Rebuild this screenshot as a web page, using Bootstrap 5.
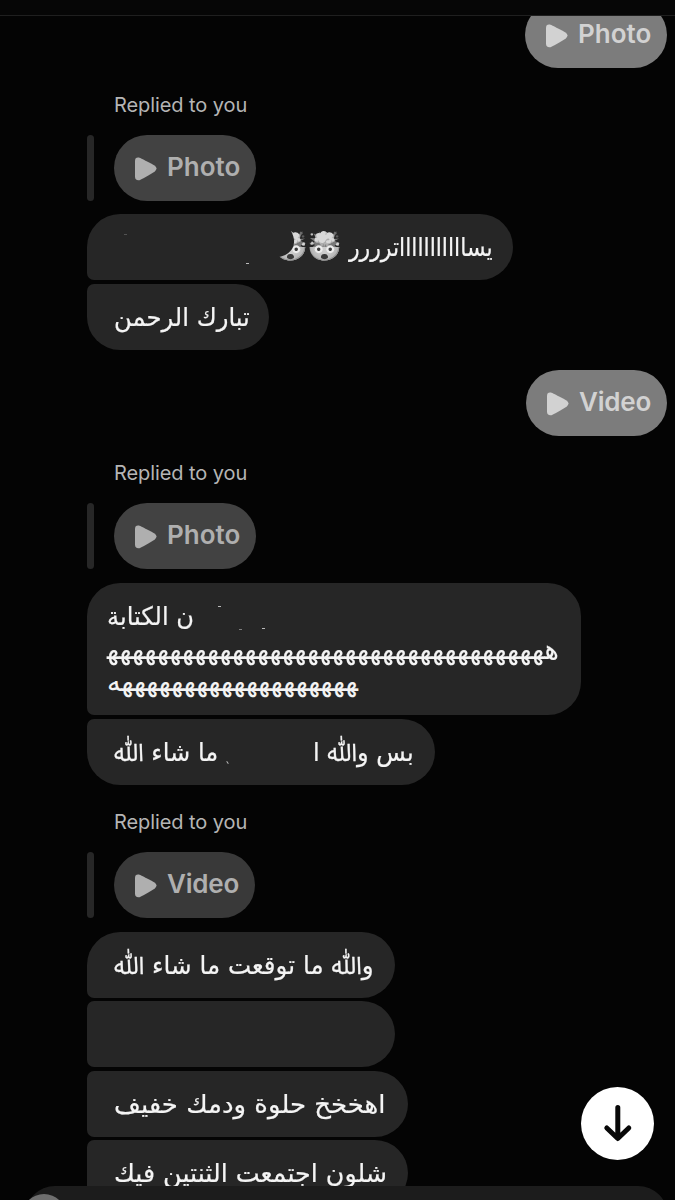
<!DOCTYPE html>
<html lang="en">
<head>
<meta charset="utf-8">
<meta name="viewport" content="width=device-width, initial-scale=1">
<title>Chat</title>
<link rel="stylesheet" href="https://cdn.jsdelivr.net/npm/bootstrap@5.3.0/dist/css/bootstrap.min.css">
<style>
body{background:#040404;color:#f4f4f4;font-family:Inter,"Liberation Sans",sans-serif}
.screen{height:1200px;width:675px}
.topbar{height:16px;background:#060606;border-bottom:1px solid #1f1f1f}
.thread{height:1170px;padding-left:87px;padding-right:8px}
.pill{height:66px;border-radius:33px;padding-left:21px;gap:10px;font-weight:600;font-size:26px;line-height:1;flex:none}
.pill svg{margin-top:1px;flex:none}
.pill b{font-weight:600;margin-top:-3px}
.photo-pill{width:142px}
.video-pill{width:141px}
.video-pill b{letter-spacing:-.2px}
.sent{background:#7c7c7c;color:#d2d2d2;align-self:flex-end}
.quoted{background:#424242;color:#afafaf}
.quoted.dim{background:#393939}
.reply-note{color:#b5b5b5;font-size:20px;line-height:24px;letter-spacing:-.08px;margin-left:27px}
.quote-bar{width:7px;height:66px;border-radius:4px;background:#272727;margin-right:20px}
.bubble{background:#262626;height:66px;border-radius:33px;position:relative;flex:none}
.first{border-bottom-left-radius:7px}
.middle{border-top-left-radius:7px;border-bottom-left-radius:7px}
.last{border-top-left-radius:7px}
.ar{font-family:"DejaVu Sans",sans-serif;font-size:25.5px;line-height:32px;height:32px;white-space:nowrap;transform-origin:0 50%;display:inline-block;direction:rtl;flex:none;-webkit-text-stroke:.2px currentColor}
.ar q{quotes:none;font-family:"Noto Sans Arabic UI","DejaVu Sans",sans-serif;font-size:.96em;-webkit-text-stroke:.3px currentColor;line-height:1}
.laugh{font-size:27px;line-height:28px;-webkit-text-stroke:.1px currentColor}
.slot{height:32px;flex:none}
.emoji{font-family:"Noto Color Emoji",sans-serif;font-size:28px;line-height:36px;width:34px;text-align:center;filter:grayscale(1) contrast(.85);flex:none;white-space:nowrap}
.emoji.cut{clip-path:path("M17 0Q24 12 19 20Q13 29 0 28V36H34V0Z");margin-right:0;margin-left:-4px}
.speck{position:absolute;width:3px;height:1px;background:#bbb}
.composer{height:60px;background:#1c1c1c;border-radius:34px;position:absolute;left:25px;right:7px;top:1186px}
.avatar{position:absolute;width:44px;height:44px;border-radius:50%;background:#6f6f6f;left:-3px;top:8px}
.to-bottom{position:absolute;left:581px;top:1087px;width:73px;height:73px;background:#fff}
</style>
</head>
<body>
<svg width="0" height="0" class="position-absolute">
<symbol id="play" viewBox="0 0 22 24"><path d="M0 4Q0 0 4 .6Q5 .8 19.500 8.500Q23.500 11.500 19.500 14.800Q7 22.500 4.500 23.200Q0 23.800 0 19.500Z" fill="currentColor"/></symbol>
</svg>
<div class="screen position-relative overflow-hidden">
  <header class="topbar"></header>
  <main class="thread d-flex flex-column overflow-hidden">
    <div class="pill photo-pill sent d-flex align-items-center" style="margin-top:-14px"><svg width="22" height="24"><use href="#play"/></svg><b>Photo</b></div>
    <div class="reply-note" style="margin-top:25px">Replied to you</div>
    <div class="d-flex" style="margin-top:18px"><i class="quote-bar"></i><div class="pill photo-pill quoted d-flex align-items-center"><svg width="22" height="24"><use href="#play"/></svg><b>Photo</b></div></div>
    <div class="bubble first d-flex align-items-center justify-content-end" style="width:426px;margin-top:13px;padding-right:20px">
      <i class="speck" style="left:37px;top:20px;opacity:.3"></i><i class="speck" style="left:159px;top:49px"></i>
      <span class="emoji cut">🤯</span>
      <span class="emoji me-2">🤯</span>
      <div class="slot" style="width:144px"><span class="ar" data-fit="144">يساااااااااااترررر</span></div>
    </div>
    <div class="bubble last d-flex align-items-center" style="width:182px;margin-top:4px;padding-left:27px"><span class="ar" data-fit="136">تبارك الرحمن</span></div>
    <div class="pill video-pill sent d-flex align-items-center" style="margin-top:20px"><svg width="22" height="24"><use href="#play"/></svg><b>Video</b></div>
    <div class="reply-note" style="margin-top:25px">Replied to you</div>
    <div class="d-flex" style="margin-top:18px"><i class="quote-bar"></i><div class="pill photo-pill quoted d-flex align-items-center"><svg width="22" height="24"><use href="#play"/></svg><b>Photo</b></div></div>
    <div class="bubble first d-flex flex-column" style="width:494px;height:132px;margin-top:14px;padding:17px 20px">
      <i class="speck" style="left:131px;top:23px"></i><i class="speck" style="left:152px;top:46px;opacity:.6"></i><i class="speck" style="left:175px;top:45px"></i>
      <div class="slot"><span class="ar" data-fit="87">ن الكتابة</span></div>
      <div class="slot mt-1"><span class="ar laugh" data-fit="452">هههههههههههههههههههههههههههههههههههه&zwj;</span></div>
      <div class="slot"><span class="ar laugh" data-fit="251">&zwj;هههههههههههههههههههه</span></div>
    </div>
    <div class="bubble last d-flex align-items-center" style="width:348px;margin-top:4px;padding-left:27px">
      <i class="speck" style="left:139px;top:43px;transform:rotate(55deg)"></i>
      <div class="slot" style="width:199px"><span class="ar" data-fit="104">ما شاء <q>الله</q></span></div><span class="ar" data-fit="101">بس و<q>الله</q> ا</span></div>
    <div class="reply-note" style="margin-top:25px">Replied to you</div>
    <div class="d-flex" style="margin-top:18px"><i class="quote-bar"></i><div class="pill video-pill quoted dim d-flex align-items-center"><svg width="22" height="24"><use href="#play"/></svg><b>Video</b></div></div>
    <div class="bubble first d-flex align-items-center" style="width:308px;margin-top:14px;padding-left:27px"><span class="ar" data-fit="260">و<q>الله</q> ما توقعت ما شاء <q>الله</q></span></div>
    <div class="bubble middle" style="width:308px;margin-top:3px"></div>
    <div class="bubble middle d-flex align-items-center" style="width:321px;margin-top:4px;padding-left:27px"><span class="ar" data-fit="272">اهخخخ حلوة ودمك خفيف</span></div>
    <div class="bubble middle d-flex align-items-center" style="width:321px;margin-top:3px;padding-left:27px"><span class="ar" data-fit="273">شلون اجتمعت الثنتين فيك</span></div>
  </main>
  <footer class="composer"><span class="avatar"></span></footer>
  <button class="to-bottom btn rounded-circle p-0 d-flex align-items-center justify-content-center" aria-label="Scroll down"><svg width="73" height="73" fill="none" stroke="#080808" stroke-width="5" stroke-linecap="round" stroke-linejoin="round"><path d="M35.800 20.500V51M24.800 41L35.800 51.500L46.800 41"/></svg></button>
</div>
<script src="https://cdn.jsdelivr.net/npm/bootstrap@5.3.0/dist/js/bootstrap.bundle.min.js"></script>
<script>
document.querySelectorAll('[data-fit]').forEach(el => {
  const w = el.offsetWidth;
  el.style.transform = 'scaleX(' + (el.dataset.fit / w) + ')';
  el.style.marginRight = (el.dataset.fit - w) + 'px';
});
</script>
</body>
</html>
